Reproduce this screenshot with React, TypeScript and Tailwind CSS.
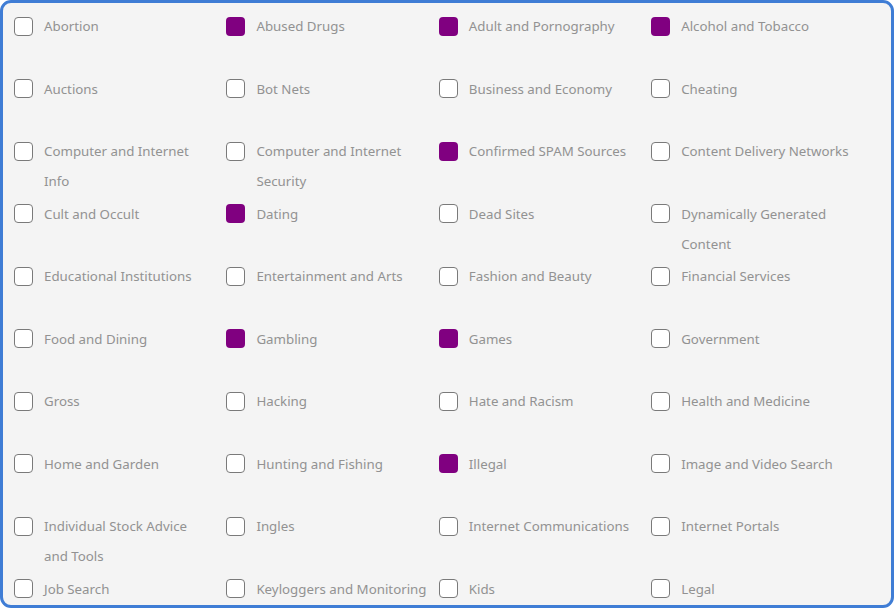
const categories: { lines: string[]; checked?: boolean }[] = [
  { lines: ["Abortion"] },
  { lines: ["Abused Drugs"], checked: true },
  { lines: ["Adult and Pornography"], checked: true },
  { lines: ["Alcohol and Tobacco"], checked: true },
  { lines: ["Auctions"] },
  { lines: ["Bot Nets"] },
  { lines: ["Business and Economy"] },
  { lines: ["Cheating"] },
  { lines: ["Computer and Internet", "Info"] },
  { lines: ["Computer and Internet", "Security"] },
  { lines: ["Confirmed SPAM Sources"], checked: true },
  { lines: ["Content Delivery Networks"] },
  { lines: ["Cult and Occult"] },
  { lines: ["Dating"], checked: true },
  { lines: ["Dead Sites"] },
  { lines: ["Dynamically Generated", "Content"] },
  { lines: ["Educational Institutions"] },
  { lines: ["Entertainment and Arts"] },
  { lines: ["Fashion and Beauty"] },
  { lines: ["Financial Services"] },
  { lines: ["Food and Dining"] },
  { lines: ["Gambling"], checked: true },
  { lines: ["Games"], checked: true },
  { lines: ["Government"] },
  { lines: ["Gross"] },
  { lines: ["Hacking"] },
  { lines: ["Hate and Racism"] },
  { lines: ["Health and Medicine"] },
  { lines: ["Home and Garden"] },
  { lines: ["Hunting and Fishing"] },
  { lines: ["Illegal"], checked: true },
  { lines: ["Image and Video Search"] },
  { lines: ["Individual Stock Advice", "and Tools"] },
  { lines: ["Ingles"] },
  { lines: ["Internet Communications"] },
  { lines: ["Internet Portals"] },
  { lines: ["Job Search"] },
  { lines: ["Keyloggers and Monitoring"] },
  { lines: ["Kids"] },
  { lines: ["Legal"] },
];

function CategoryItem({ lines, checked }: { lines: string[]; checked?: boolean }) {
  return (
    <label className="flex items-start gap-[11px]">
      <span className="flex h-[30px] items-center">
        <span
          className={
            checked
              ? "block h-[19px] w-[19px] rounded-[4px] bg-[#800080]"
              : "block h-[19px] w-[19px] rounded-[4px] border-[1.5px] border-[#7a7a7a] bg-white"
          }
        />
      </span>
      <span className="flex flex-col whitespace-nowrap text-[13.3px] leading-[30px] text-[#929292]">
        {lines.map((line) => (
          <span key={line}>{line}</span>
        ))}
      </span>
    </label>
  );
}

export default function App() {
  return (
    <div className="h-[610px] w-[894px] bg-white font-['Noto_Sans',sans-serif]">
      <div className="h-[608px] w-[894px] overflow-hidden rounded-[11px] border-[3px] border-[#3f7dd5] bg-[#f4f4f4] pl-[11px] pt-[8px]">
        <div className="grid grid-cols-[repeat(4,212.4px)] auto-rows-[62.5px]">
          {categories.map((c) => (
            <CategoryItem key={c.lines.join(" ")} lines={c.lines} checked={c.checked} />
          ))}
        </div>
      </div>
    </div>
  );
}
